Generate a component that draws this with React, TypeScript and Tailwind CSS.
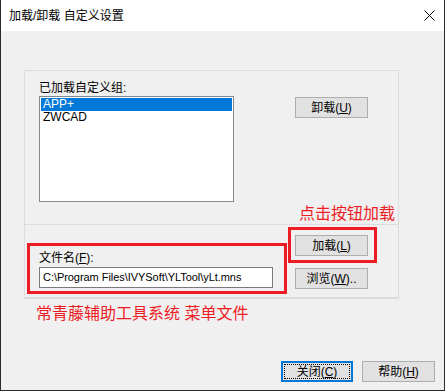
import React from "react";

const FONT = { fontFamily: '"Liberation Sans", "Noto Sans CJK SC", sans-serif' };

function Btn({ label, k, w = "w-[73px]", focus = false }: { label: string; k: string; w?: string; focus?: boolean }) {
  return (
    <div
      className={`relative ${w} h-[21px] flex items-center justify-center bg-[#e1e1e1] text-[12px] text-black ${
        focus ? "border-2 border-[#0078d7]" : "border border-[#adadad]"
      }`}
    >
      {focus && <div className="absolute inset-[1px] border border-dotted border-black" />}
      <span className="leading-[14px]">
        {label}(<span className="underline underline-offset-[1px]">{k}</span>)
      </span>
    </div>
  );
}

export default function App() {
  return (
    <div style={FONT} className="w-[445px] h-[391px] flex flex-col border-x border-b border-[#2b2b2b] bg-white text-black">
      {/* Title bar */}
      <div className="h-[31px] flex items-center justify-between bg-white">
        <span className="pl-[8px] text-[12px] leading-[14px]">加载/卸载 自定义设置</span>
        <svg width="11" height="11" viewBox="0 0 11 11" className="mr-[9px]">
          <path d="M0.5 0.5 L10.5 10.5 M10.5 0.5 L0.5 10.5" stroke="#000" strokeWidth="1" />
        </svg>
      </div>

      {/* Body */}
      <div className="relative flex-1 flex flex-col bg-[#f0f0f0]">
        <div className="ml-[23px] mt-[39px] w-[375px] border-x border-t border-b-2 border-[#dcdcdc]">
          {/* Upper section */}
          <div className="h-[154px] border-b border-[#dcdcdc] flex pl-[14px]">
            <div className="pt-[10px] flex flex-col">
              <div className="h-[15px] text-[12px] leading-[15px]">已加载自定义组:</div>
              <div className="w-[195px] h-[106px] border border-[#828790] bg-white p-[1px] text-[12px]">
                <div className="h-[13px] leading-[13px] pl-[2px] bg-[#0078d7] text-white">APP+</div>
                <div className="h-[13px] leading-[13px] pl-[2px]">ZWCAD</div>
              </div>
            </div>
            <div className="ml-[61px] pt-[26px]">
              <Btn label="卸载" k="U" />
            </div>
          </div>
          {/* Lower section */}
          <div className="h-[72px] flex pl-[14px]">
            <div className="pt-[26px] flex flex-col">
              <div className="h-[15px] text-[12px] leading-[15px]">
                文件名(<span className="underline underline-offset-[1px]">F</span>):
              </div>
              <div className="mt-[1px] w-[234px] h-[21px] border border-[#7a7a7a] bg-white pl-[3px] text-[11px] tracking-[-0.05px] leading-[19px] whitespace-nowrap overflow-hidden">
                C:\Program Files\IVYSoft\YLTool\yLt.mns
              </div>
            </div>
            <div className="ml-[22px] pt-[10px] flex flex-col gap-[12px]">
              <Btn label="加载" k="L" />
              <div className="relative w-[73px] h-[21px] flex items-center justify-center bg-[#e1e1e1] border border-[#adadad] text-[12px]">
                <span className="leading-[14px]">
                  浏览(<span className="underline underline-offset-[1px]">W</span>)..
                </span>
              </div>
            </div>
          </div>
        </div>

        <div className="ml-[35px] mt-[7px] text-[16px] leading-[16px] text-[#ed1c24] whitespace-nowrap">
          常青藤辅助工具系统 菜单文件
        </div>

        <div className="flex-1" />

        <div className="flex justify-end gap-[9px] pr-[9px] mb-[8px]">
          <Btn label="关闭" k="C" w="w-[72px]" focus />
          <Btn label="帮助" k="H" />
        </div>

        {/* Annotations */}
        <div className="absolute left-[297px] top-[175px] w-[97px] text-right text-[16px] leading-[16px] text-[#ed1c24] whitespace-nowrap">
          点击按钮加载
        </div>
        <div className="absolute left-[26px] top-[212px] w-[260px] h-[51px] border-[3px] border-[#ed1c24]" />
        <div className="absolute left-[287px] top-[196px] w-[89px] h-[36px] border-[3px] border-[#ed1c24]" />
      </div>
    </div>
  );
}
